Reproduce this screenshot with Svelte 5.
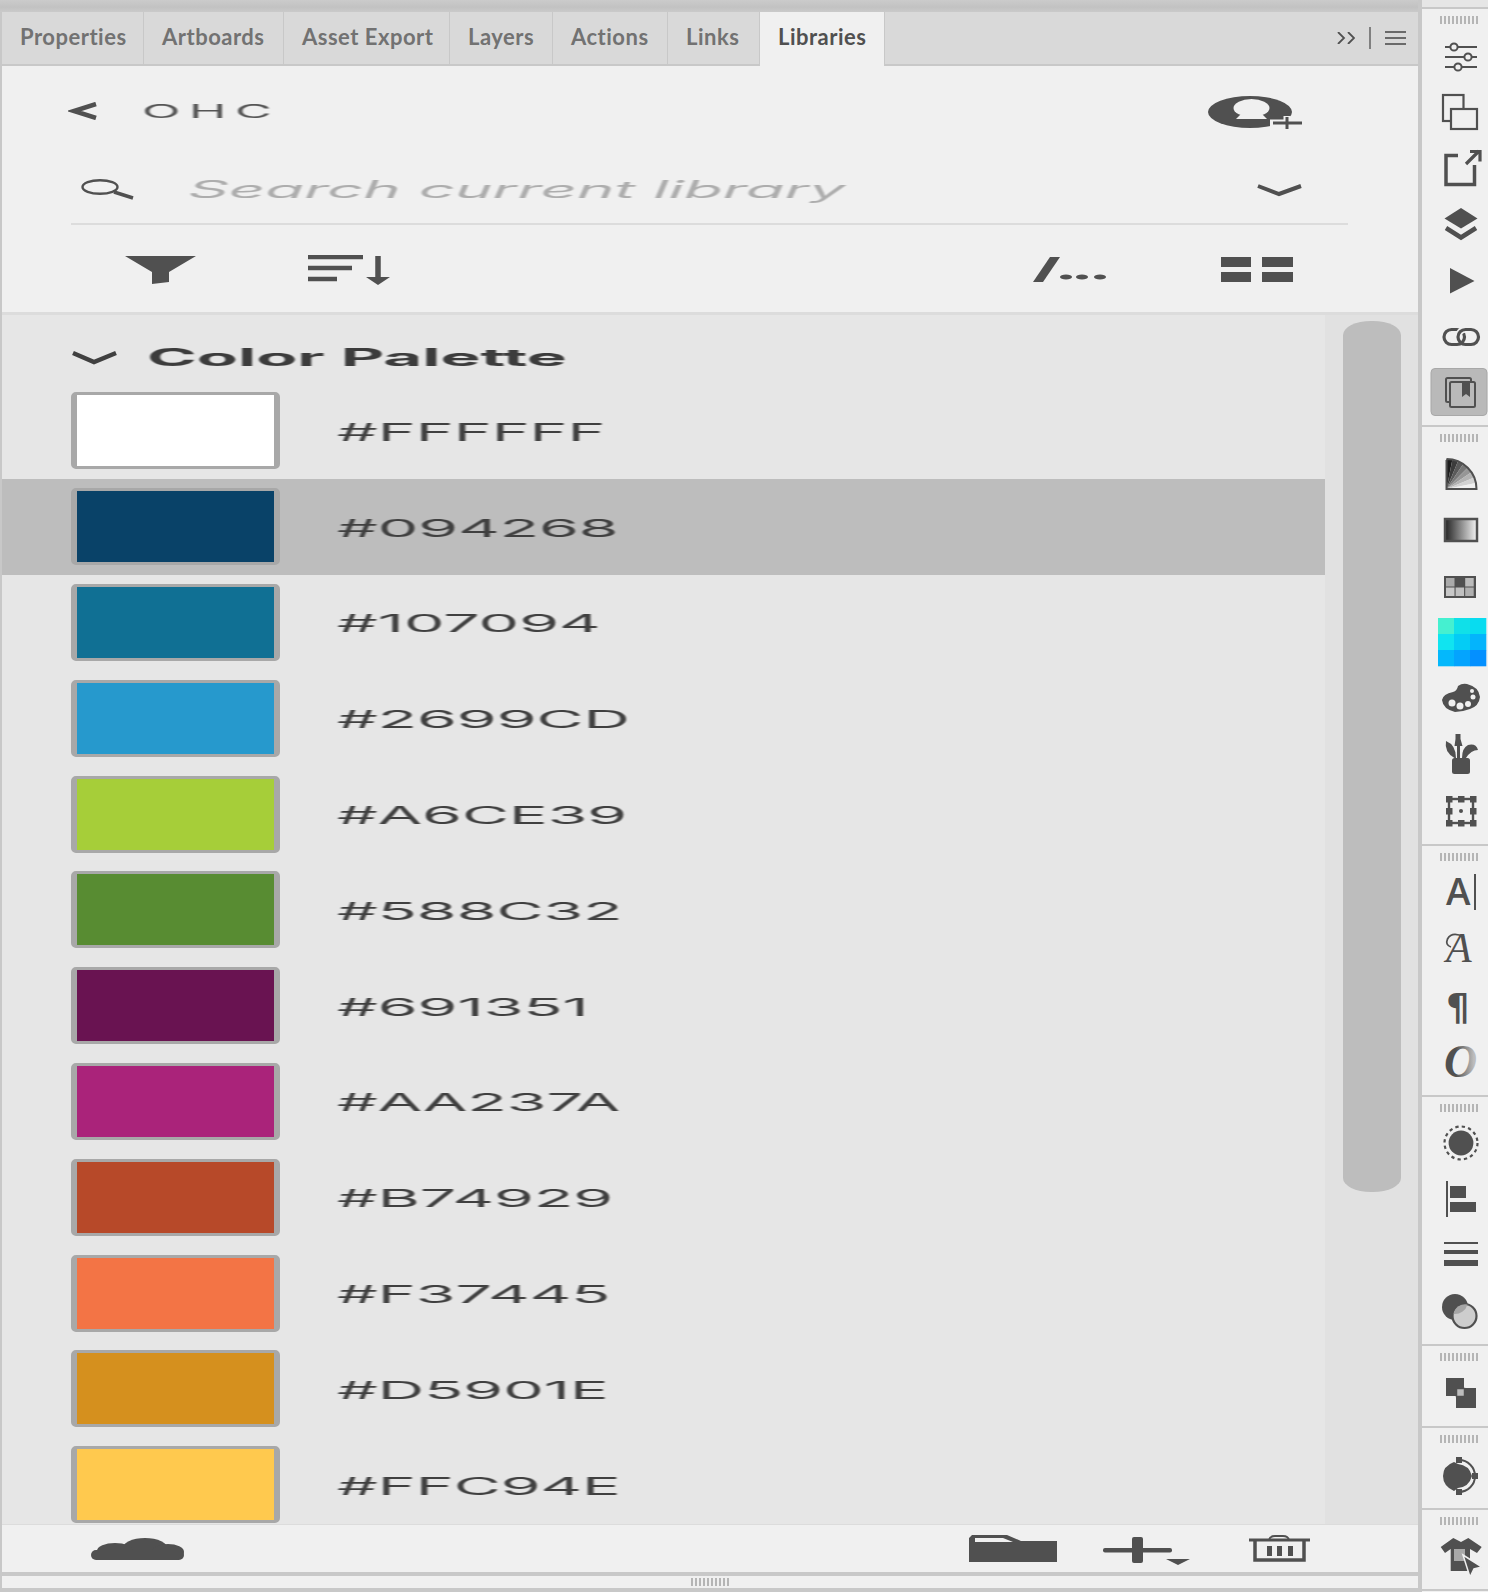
<script>
  const tabs = ["Properties", "Artboards", "Asset Export", "Layers", "Actions", "Links", "Libraries"];
  const colors = ["FFFFFF", "094268", "107094", "2699CD", "A6CE39", "588C32", "691351", "AA237A", "B74929", "F37445", "D5901E", "FFC94E"];

  // fan wedges of the gradient-mesh tool
  const fan = [0, 1, 2, 3, 4, 5, 6, 7].map((i) => {
    const a = (i * Math.PI) / 16;
    const b = ((i + 1) * Math.PI) / 16;
    const pt = (t) => `${(46.5 + 30 * Math.sin(t)).toFixed(1)} ${(489 - 30 * Math.cos(t)).toFixed(1)}`;
    const g = 30 + i * 30;
    return { d: `M46.5 489L${pt(a)}A30 30 0 0 1 ${pt(b)}Z`, fill: `rgb(${g},${g},${g})` };
  });

  const cyan = ["#45f0d0", "#10e0e8", "#08dcf0", "#10e4f0", "#04ccf5", "#04b4fc", "#04b8fc", "#04a4fe", "#0490ff"];
  const swatchCells = ["#aaa", "#505050", "#bbb", "#c8c8c8", "#c0c0c0", "#b0b0b0"];
  const handles = [[46, 796], [58, 796], [70, 796], [46, 808], [70, 808], [46, 820], [58, 820], [70, 820]];
</script>

<div class="window">
  <main class="panel">
    <div class="band"></div>
    <nav class="tabs">
      {#each tabs as tab, i}
        <div class="tab" class:active={i === 6}>{tab}</div>
      {/each}
      <div class="tab-menu">
        <svg width="18" height="12" viewBox="0 0 18 12"><path d="M1 0l6 6-6 6M11 0l6 6-6 6" fill="none" stroke="#505050" stroke-width="1.8"/></svg>
        <span class="tab-sep"></span>
        <svg width="21" height="14" viewBox="0 0 21 14"><path d="M0 1h21M0 7h21M0 13h21" stroke="#6a6a6a" stroke-width="1.8"/></svg>
      </div>
    </nav>

    <div class="lib-row">
      <svg class="back" width="31" height="18" viewBox="0 0 31 18"><path d="M28 2L6 9l22 7" fill="none" stroke="#505050" stroke-width="4.5"/></svg>
      <span class="wide ohc">OHC</span>
      <svg class="user" width="95" height="34" viewBox="0 0 95 34">
        <ellipse cx="42" cy="16" rx="42" ry="16" fill="#505050"/>
        <ellipse cx="43.500" cy="12" rx="18" ry="9" fill="#f0f0f0"/>
        <path d="M34 17h19l6 6H28z" fill="#f0f0f0"/>
        <path d="M62 27h33M79 20v13" stroke="#f0f0f0" stroke-width="7"/>
        <path d="M65 27h29M79 21v12" stroke="#505050" stroke-width="3"/>
      </svg>
    </div>

    <div class="search-row">
      <svg class="lens" width="54" height="21" viewBox="0 0 54 21"><ellipse cx="19" cy="8" rx="17.500" ry="6.800" fill="none" stroke="#505050" stroke-width="2.400"/><path d="M33 13l19 6" stroke="#505050" stroke-width="3.500"/></svg>
      <span class="wide search">Search current library</span>
      <svg class="drop" width="47" height="14" viewBox="0 0 47 14"><path d="M2 3l21 8 22-8" fill="none" stroke="#505050" stroke-width="4"/></svg>
    </div>

    <div class="action-row">
      <svg class="funnel" width="71" height="28" viewBox="0 0 71 28"><path d="M0 0h71L44 16v10l-17 2V16z" fill="#505050"/></svg>
      <svg class="sort" width="84" height="30" viewBox="0 0 84 30">
        <path d="M0 2h55M0 13h44M0 24h29" stroke="#505050" stroke-width="4.500"/>
        <path d="M70 1v25" stroke="#505050" stroke-width="5.500"/><path d="M58 22h24l-12 8z" fill="#505050"/>
      </svg>
      <svg class="dash" width="75" height="26" viewBox="0 0 75 26">
        <path d="M17 0h10L10 25H0z" fill="#505050"/>
        <ellipse cx="33" cy="20" rx="6" ry="2.600" fill="#505050"/><ellipse cx="49" cy="20" rx="6" ry="2.600" fill="#505050"/><ellipse cx="67" cy="20" rx="6" ry="2.600" fill="#505050"/>
      </svg>
      <svg class="view" width="73" height="26" viewBox="0 0 73 26">
        <path d="M0 0h30v10H0zM0 15h30v10H0zM41 0h31v10H41zM41 15h31v10H41z" fill="#505050"/>
      </svg>
    </div>

    <section class="list">
      <div class="rows">
        <div class="group">
          <svg width="47" height="15" viewBox="0 0 47 15"><path d="M2 3l21 9 22-9" fill="none" stroke="#404040" stroke-width="4.500"/></svg>
          <span class="wide group-name">Color Palette</span>
        </div>
        {#each colors as hex, i}
          <div class="row" class:selected={i === 1}>
            <div class="swatch" style="background:#{hex}"></div>
            <span class="wide hex">#{hex}</span>
          </div>
        {/each}
      </div>
      <div class="track"><div class="thumb"></div></div>
    </section>

    <footer class="foot">
      <svg class="cloud" width="93" height="22" viewBox="0 0 93 22">
        <ellipse cx="54" cy="11" rx="23" ry="11" fill="#505050"/><ellipse cx="24" cy="13" rx="18" ry="8" fill="#505050"/>
        <ellipse cx="77" cy="14" rx="16" ry="8" fill="#505050"/><rect y="12" width="93" height="10" rx="5" fill="#505050"/>
      </svg>
      <svg class="folder" width="88" height="27" viewBox="0 0 88 27">
        <path d="M3 0h35l14 6h36v21H0V3z" fill="#505050"/><path d="M6 3h28l10 4H6z" fill="#f0f0f0"/>
      </svg>
      <svg class="plus" width="88" height="29" viewBox="0 0 88 29">
        <rect y="11" width="69" height="4.500" rx="2" fill="#505050"/><rect x="29" width="11" height="26" rx="2" fill="#505050"/><path d="M63 22h24l-12 6z" fill="#505050"/>
      </svg>
      <svg class="trash" width="62" height="27" viewBox="0 0 62 27">
        <path d="M0 5h61" stroke="#505050" stroke-width="3"/><path d="M6 6v19h49V6" fill="none" stroke="#505050" stroke-width="3.500"/>
        <path d="M20 5q1-4 6-4h8q5 0 6 4" fill="none" stroke="#505050" stroke-width="2"/>
        <path d="M18 11h5v10h-5zM28 11h5v10h-5zM39 11h5v10h-5z" fill="#505050"/>
      </svg>
    </footer>
    <div class="resize"><span class="grip"></span></div>
  </main>

  <aside class="tools">
    <div class="tools-top"></div>

    <div class="section">
      <span class="grip"></span>
      <svg class="slot" viewBox="22 28 66 56">
        <path d="M45 47h32M45 57h32M45 67h32" stroke="#505050" stroke-width="2"/>
        <circle cx="54" cy="47" r="3.600" fill="#f0f0f0" stroke="#505050" stroke-width="2"/><circle cx="68" cy="57" r="3.600" fill="#f0f0f0" stroke="#505050" stroke-width="2"/><circle cx="58" cy="67" r="3.600" fill="#f0f0f0" stroke="#505050" stroke-width="2"/>
      </svg>
      <svg class="slot" viewBox="22 84 66 56">
        <rect x="43" y="95" width="20.500" height="26" fill="none" stroke="#505050" stroke-width="2.200"/><rect x="51" y="109" width="26" height="20" fill="#f0f0f0" stroke="#505050" stroke-width="2.200"/>
      </svg>
      <svg class="slot" viewBox="22 140 66 56">
        <path d="M58 155.500H46V184.500H74.500V165" fill="none" stroke="#505050" stroke-width="3.500"/>
        <path d="M66 164l13-13M70 151.500h10v10" fill="none" stroke="#505050" stroke-width="3.200"/>
      </svg>
      <svg class="slot" viewBox="22 196 66 56">
        <path d="M61 208l16.500 10.500L61 228.500 44.500 218.500z" fill="#505050"/><path d="M46 228l15 9.500 15-9.500" fill="none" stroke="#505050" stroke-width="4.500"/>
      </svg>
      <svg class="slot" viewBox="22 252 66 56"><path d="M50 268l24.500 13L50 293.500z" fill="#505050"/></svg>
      <svg class="slot" viewBox="22 308 66 56">
        <rect x="58" y="329.500" width="20.500" height="15" rx="7.500" fill="none" stroke="#505050" stroke-width="3.200"/>
        <rect x="44" y="329.500" width="20.500" height="15" rx="7.500" fill="none" stroke="#505050" stroke-width="3.200"/>
        <path d="M58 337a7.500 7.500 0 0 1 7.500-7.500H69" fill="none" stroke="#f0f0f0" stroke-width="6.500"/>
        <path d="M58 337a7.500 7.500 0 0 1 7.500-7.500H71" fill="none" stroke="#505050" stroke-width="3.200"/>
      </svg>
      <svg class="slot" viewBox="22 364 66 56">
        <rect x="31" y="368.500" width="56" height="47" rx="4" fill="#b9b9b9" stroke="#a8a8a8"/>
        <rect x="46" y="378" width="25" height="24" rx="1.500" fill="none" stroke="#505050" stroke-width="2"/><rect x="50" y="382" width="25" height="25" rx="1.500" fill="#b9b9b9" stroke="#505050" stroke-width="2"/>
        <path d="M62 382h8v15l-4-3-4 3z" fill="#505050"/>
      </svg>
    </div>

    <div class="section">
      <span class="grip"></span>
      <svg class="slot" viewBox="22 446 66 56">
        {#each fan as w}<path d={w.d} fill={w.fill}/>{/each}
        <path d="M46.500 460V489H76.500A30 30 0 0 0 46.500 459" fill="none" stroke="#505050" stroke-width="2"/>
      </svg>
      <svg class="slot" viewBox="22 502 66 56">
        <defs><linearGradient id="ramp"><stop offset="0" stop-color="#222"/><stop offset="1" stop-color="#f4f4f4"/></linearGradient></defs>
        <rect x="45" y="519" width="32" height="22" fill="url(#ramp)" stroke="#505050" stroke-width="2.500"/>
      </svg>
      <svg class="slot" viewBox="22 558 66 56">
        <rect x="44" y="576" width="32" height="22" fill="#505050"/>
        {#each swatchCells as c, i}<rect x={46 + (i % 3) * 9.6} y={578 + Math.floor(i / 3) * 9.500} width="8.500" height="8.500" fill={c}/>{/each}
      </svg>
      <svg class="slot cyan" viewBox="22 614 66 56">
        {#each cyan as c, i}<rect x={38 + (i % 3) * 16} y={618 + Math.floor(i / 3) * 16} width="16.300" height="16.300" fill={c}/>{/each}
      </svg>
      <svg class="slot" viewBox="22 670 66 56">
        <path d="M42 700Q43 694 53 692Q57 691 58 686Q62 683 67 684Q79 687 80 697Q79 706 70 709Q62 712 55 712Q43 709 42 700Z" fill="#505050"/>
        <circle cx="52" cy="703" r="3.500" fill="#f0f0f0"/><circle cx="60" cy="706" r="3.500" fill="#f0f0f0"/><circle cx="68" cy="704" r="3" fill="#f0f0f0"/><circle cx="73" cy="697" r="2.500" fill="#f0f0f0"/><circle cx="72" cy="691" r="2" fill="#f0f0f0"/>
      </svg>
      <svg class="slot" viewBox="22 726 66 56">
        <rect x="52" y="758" width="18" height="16" rx="2.500" fill="#505050"/>
        <path d="M55.500 734h5v5l2 7h-2.500v12h-3v-12h-2.500l1-7z" fill="#505050"/>
        <path d="M54.500 758Q44 752 46 741Q56 745 56 758z" fill="#505050"/>
        <path d="M62 758Q62 748 68 745Q76 743 78 750Q71 750 66 758z" fill="#505050"/>
      </svg>
      <svg class="slot" viewBox="22 782 66 56">
        <rect x="49" y="799" width="24" height="24" fill="none" stroke="#505050" stroke-width="2.400"/>
        {#each handles as h}<rect x={h[0]} y={h[1]} width="6.500" height="6.500" fill="#505050"/>{/each}
        <circle cx="61" cy="811" r="2" fill="#505050"/>
      </svg>
    </div>

    <div class="section">
      <span class="grip"></span>
      <svg class="slot" viewBox="22 865 66 56">
        <text x="46" y="905" class="g-a">A</text><rect x="74" y="874" width="2" height="36" fill="#505050"/>
      </svg>
      <svg class="slot" viewBox="22 921 66 56">
        <text x="46" y="962" class="g-script">A</text>
        <path d="M64 937Q52 931 47.500 939Q45 945 51 947" fill="none" stroke="#505050" stroke-width="1.800"/>
      </svg>
      <svg class="slot" viewBox="22 977 66 56"><text x="46" y="1020" class="g-para">¶</text></svg>
      <svg class="slot" viewBox="22 1033 66 56">
        <defs><linearGradient id="ofade"><stop offset="0.35" stop-color="#505050"/><stop offset="0.9" stop-color="#bdbdbd"/></linearGradient></defs>
        <text x="44" y="1077" class="g-o" fill="url(#ofade)">O</text>
      </svg>
    </div>

    <div class="section">
      <span class="grip"></span>
      <svg class="slot" viewBox="22 1116 66 56">
        <circle cx="61" cy="1143" r="12.400" fill="#505050"/><circle cx="61" cy="1143" r="16.500" fill="none" stroke="#505050" stroke-width="2.200" stroke-dasharray="3.300 3.200"/>
      </svg>
      <svg class="slot" viewBox="22 1172 66 56">
        <path d="M46 1181h2v36h-2zM50 1186h16v12H50zM50 1202h26v10H50z" fill="#505050"/>
      </svg>
      <svg class="slot" viewBox="22 1228 66 56"><path d="M44 1242h34v2H44zM44 1250h34v4H44zM44 1260h34v6H44z" fill="#505050"/></svg>
      <svg class="slot" viewBox="22 1284 66 56">
        <circle cx="55" cy="1307" r="13" fill="#505050"/><circle cx="64.500" cy="1316" r="12" fill="#cdcdcd" stroke="#505050" stroke-width="2.200"/>
        <path d="M53.500 1314a12 12 0 0 1 14-9.500a13 13 0 0 1-14 9.500z" fill="#a6a6a6"/>
      </svg>
    </div>

    <div class="section">
      <span class="grip"></span>
      <svg class="slot" viewBox="22 1365 66 56">
        <path d="M46 1378h18v18H46zM56 1388h20v20H56z" fill="#505050"/><rect x="56.500" y="1388.500" width="8" height="8" fill="#bdbdbd" stroke="#505050" stroke-width="1.500"/>
      </svg>
    </div>

    <div class="section">
      <span class="grip"></span>
      <svg class="slot" viewBox="22 1447 66 56">
        <path d="M54 1462Q43 1466 43 1476Q43 1486 54 1491L58 1488Q69 1487 72 1476Q69 1465 58 1464Z" fill="#505050"/>
        <path d="M59 1460A16 16 0 0 1 59 1492" fill="none" stroke="#505050" stroke-width="2"/>
        <path d="M56 1457h6v6h-6zM72 1473h6v6h-6zM56 1489h6v6h-6z" fill="#505050"/>
      </svg>
    </div>

    <div class="section">
      <span class="grip"></span>
      <svg class="slot" viewBox="22 1530 66 56">
        <path d="M53.300 1539L61 1543L68.300 1539L81.700 1548L77 1554L70 1550V1572H50.700V1550L45 1554L40.700 1548Z" fill="#505050"/>
        <rect x="54" y="1550" width="11" height="12" fill="#a8a8a8"/>
        <path d="M63 1556l19 12-8 2-4 8z" fill="#505050" stroke="#f0f0f0" stroke-width="1.500"/>
      </svg>
    </div>
  </aside>
</div>

<style>
  :global(body) {
    margin: 0;
    background: #f0f0f0;
  }

  .window {
    display: flex;
    width: 1488px;
    height: 1592px;
    overflow: hidden;
    font-family: Inter, "Liberation Sans", Arial, sans-serif;
  }

  .panel {
    display: flex;
    flex-direction: column;
    width: 1418px;
    box-sizing: border-box;
    border-left: 2px solid #c8c8c8;
    background: #f0f0f0;
  }

  .band {
    height: 12px;
    margin-left: -2px;
    background: linear-gradient(#cbcbcb 0, #c2c2c2 60%, #cacaca 100%);
  }

  .tabs {
    display: grid;
    grid-template-columns: 142px 140px 166px 103px 115px 92px 124px 1fr;
    height: 54px;
    box-sizing: border-box;
    background: #d9d9d9;
  }

  .tab {
    display: flex;
    align-items: center;
    padding: 0 0 3px 18px;
    border-right: 1.500px solid #c8c8c8;
    border-bottom: 2px solid #c8c8c8;
    color: #727272;
    font-family: Lato, sans-serif;
    font-size: 22px;
    font-weight: 700;
    letter-spacing: 0.5px;
  }

  .tab.active {
    background: #f0f0f0;
    border-right: 0;
    border-bottom: 0;
    padding-bottom: 5px;
    color: #505050;
  }

  .tab-menu {
    display: flex;
    align-items: center;
    justify-content: flex-end;
    padding-right: 12px;
    border-bottom: 2px solid #c8c8c8;
    border-left: 1.500px solid #c8c8c8;
  }

  .tab-sep {
    width: 2px;
    height: 22px;
    margin: 0 14px;
    background: #808080;
  }

  .wide {
    display: inline-block;
    transform-origin: left center;
    white-space: nowrap;
    filter: blur(0.4px);
  }

  .lib-row {
    display: flex;
    align-items: center;
    height: 89px;
    padding: 0 115px 0 66px;
  }

  .back {
    margin-right: 43px;
  }

  .ohc {
    color: #555;
    font-size: 19px;
    letter-spacing: 3.200px;
    margin-top: 2px;
    transform: scaleX(2.650);
  }

  .user {
    margin-left: auto;
    margin-top: 4px;
  }

  .search-row {
    display: flex;
    align-items: center;
    height: 70px;
    margin-right: 70px;
    margin-left: 69px;
    border-bottom: 2px solid #dcdcdc;
    box-sizing: border-box;
  }

  .lens {
    margin-left: 10px;
  }

  .search {
    margin-left: 53px;
    color: #adadad;
    font-size: 24px;
    font-style: italic;
    transform: scaleX(2.645);
  }

  .drop {
    margin-left: auto;
    margin-right: 45px;
    margin-top: 2px;
  }

  .action-row {
    display: flex;
    align-items: center;
    height: 90px;
    box-sizing: border-box;
    padding: 2px 0 0 123px;
    border-bottom: 3px solid #dcdcdc;
  }

  .sort {
    margin-left: 112px;
  }

  .dash {
    margin-left: auto;
  }

  .view {
    margin: 0 124px 0 113px;
  }

  .list {
    display: flex;
    flex: 1;
    min-height: 0;
    background: #e6e6e6;
  }

  .rows {
    width: 1323px;
    overflow: hidden;
  }

  .group {
    display: flex;
    align-items: center;
    height: 68px;
    box-sizing: border-box;
    padding: 17px 0 0 69px;
  }

  .group-name {
    margin-left: 29px;
    color: #3c3c3c;
    font-size: 24px;
    font-weight: 700;
    transform: scaleX(2.800);
  }

  .row {
    display: flex;
    align-items: center;
    height: 95.800px;
    padding-left: 69px;
  }

  .row.selected {
    background: #bdbdbd;
  }

  .swatch {
    width: 197px;
    height: 71px;
    border: solid #a8a8a8;
    border-width: 3px 6px;
    border-radius: 5px;
    filter: blur(0.5px);
  }

  .hex {
    margin-left: 57px;
    margin-top: 3px;
    color: #404040;
    font-size: 24px;
    transform: scaleX(2.680);
  }

  .track {
    flex: 1;
    padding: 6px 17px 0 18px;
    background: #e1e1e1;
  }

  .thumb {
    height: 871px;
    border-radius: 28px / 14px;
    background: #bdbdbd;
  }

  .foot {
    display: flex;
    align-items: center;
    height: 48px;
    box-sizing: border-box;
    padding-left: 89px;
    border-top: 1px solid #dcdcdc;
  }

  .folder {
    margin-left: 785px;
  }

  .plus {
    margin: 6px 0 0 46px;
  }

  .trash {
    margin-left: 58px;
  }

  .resize {
    display: flex;
    justify-content: center;
    align-items: center;
    height: 12px;
    border-top: 4px solid #c8c8c8;
    border-bottom: 4px solid #c8c8c8;
  }

  .grip {
    display: block;
    width: 38px;
    height: 8px;
    background: repeating-linear-gradient(90deg, #b5b5b5 0 2px, transparent 2px 4px);
  }

  .tools {
    flex: none;
    width: 70px;
    box-sizing: border-box;
    border-left: 4px solid #c8c8c8;
    background: #f0f0f0;
  }

  .tools-top {
    height: 7px;
    border-bottom: 2px solid #c8c8c8;
    background: #e6e6e6;
  }

  .section {
    border-bottom: 2px solid #c8c8c8;
  }

  .section .grip {
    margin: 7px 0 4px 18px;
  }

  .slot {
    display: block;
    width: 66px;
    height: 56px;
  }

  .cyan {
    filter: blur(0.6px);
  }

  .section:nth-child(2) { padding-bottom: 5px; }
  .section:nth-child(3) { padding-bottom: 6px; }
  .section:nth-child(4) { padding-bottom: 6px; }
  .section:nth-child(5) { padding-bottom: 4px; }
  .section:nth-child(6) { padding-bottom: 5px; }
  .section:nth-child(7) { padding-bottom: 5px; }
  .section:nth-child(8) { padding-bottom: 4px; }

  .g-a {
    fill: #505050;
    font-family: "Open Sans", sans-serif;
    font-size: 37px;
    font-weight: 600;
  }

  .g-script {
    fill: #505050;
    font-family: "Liberation Serif", serif;
    font-size: 42px;
    font-style: italic;
  }

  .g-para {
    fill: #505050;
    font-family: "DejaVu Sans", sans-serif;
    font-size: 37px;
    font-weight: 700;
  }

  .g-o {
    font-family: "Liberation Serif", serif;
    font-size: 46px;
    font-style: italic;
    font-weight: 700;
  }
</style>
